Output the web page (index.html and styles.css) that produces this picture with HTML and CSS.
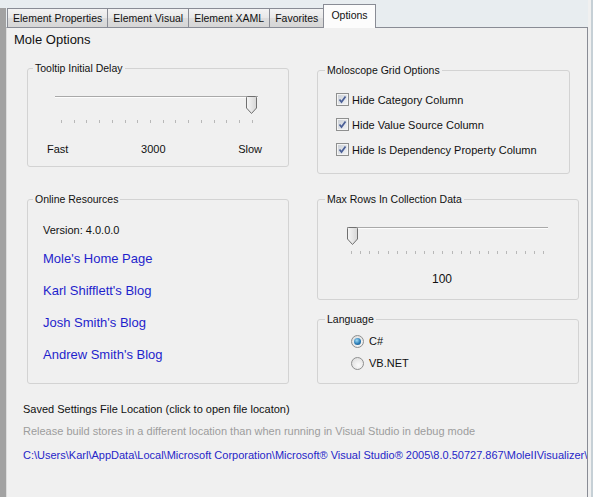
FILE: index.html
```html
<!DOCTYPE html>
<html lang="en">
<head>
	<meta charset="UTF-8">
	<title>Mole Options</title>
	<link rel="stylesheet" href="styles.css">
</head>
<body>
	<div class="window">
		<div class="edge-left"></div>
		<div class="main">
			<div class="tabs">
				<div class="tab">Element Properties</div>
				<div class="tab">Element Visual</div>
				<div class="tab">Element XAML</div>
				<div class="tab">Favorites</div>
				<div class="tab active">Options</div>
			</div>
			<div class="panel">
				<div class="title">Mole Options</div>
				<div class="columns">
					<div class="col">
						<fieldset class="group g-tooltip">
							<legend>Tooltip Initial Delay</legend>
							<div class="slider s-delay">
								<div class="track"></div>
								<svg class="thumb" width="11" height="18" viewBox="0 0 11 18">
									<defs><linearGradient id="tg1" x1="0" y1="0" x2="1" y2="0"><stop offset="0" stop-color="#f7f7f7"/><stop offset="1" stop-color="#d6d6d6"/></linearGradient></defs>
									<path d="M1.5 .5h8a1 1 0 0 1 1 1v10.5l-5 5.5l-5-5.5V1.5a1 1 0 0 1 1-1z" fill="url(#tg1)" stroke="#707070"/>
								</svg>
							</div>
							<div class="ticks t-delay">
								<span></span><span></span><span></span><span></span><span></span><span></span><span></span><span></span>
								<span></span><span></span><span></span><span></span><span></span><span></span><span></span><span></span>
							</div>
							<div class="scale"><span>Fast</span><span>3000</span><span>Slow</span></div>
						</fieldset>
						<fieldset class="group g-online">
							<legend>Online Resources</legend>
							<div class="version">Version: 4.0.0.0</div>
							<div class="links">
								<a href="#">Mole's Home Page</a>
								<a href="#">Karl Shifflett's Blog</a>
								<a href="#">Josh Smith's Blog</a>
								<a href="#">Andrew Smith's Blog</a>
							</div>
						</fieldset>
					</div>
					<div class="col col-right">
						<fieldset class="group g-grid">
							<legend>Moloscope Grid Options</legend>
							<div class="checks">
								<div class="check-row"><span class="cb"><svg width="11" height="11" viewBox="0 0 11 11"><path d="M2.5 5.5l2 2.6l4-5.6" stroke="#4a5f97" stroke-width="1.7" fill="none"/></svg></span>Hide Category Column</div>
								<div class="check-row"><span class="cb"><svg width="11" height="11" viewBox="0 0 11 11"><path d="M2.5 5.5l2 2.6l4-5.6" stroke="#4a5f97" stroke-width="1.7" fill="none"/></svg></span>Hide Value Source Column</div>
								<div class="check-row"><span class="cb"><svg width="11" height="11" viewBox="0 0 11 11"><path d="M2.5 5.5l2 2.6l4-5.6" stroke="#4a5f97" stroke-width="1.7" fill="none"/></svg></span>Hide Is Dependency Property Column</div>
							</div>
						</fieldset>
						<fieldset class="group g-rows">
							<legend>Max Rows In Collection Data</legend>
							<div class="slider s-rows">
								<div class="track"></div>
								<svg class="thumb" width="11" height="18" viewBox="0 0 11 18">
									<defs><linearGradient id="tg2" x1="0" y1="0" x2="1" y2="0"><stop offset="0" stop-color="#f7f7f7"/><stop offset="1" stop-color="#d6d6d6"/></linearGradient></defs>
									<path d="M1.5 .5h8a1 1 0 0 1 1 1v10.5l-5 5.5l-5-5.5V1.5a1 1 0 0 1 1-1z" fill="url(#tg2)" stroke="#707070"/>
								</svg>
							</div>
							<div class="ticks t-rows">
								<span></span><span></span><span></span><span></span><span></span><span></span><span></span><span></span><span></span><span></span><span></span>
								<span></span><span></span><span></span><span></span><span></span><span></span><span></span><span></span><span></span><span></span><span></span>
							</div>
							<div class="rows-value">100</div>
						</fieldset>
						<fieldset class="group g-lang">
							<legend>Language</legend>
							<div class="radios">
								<div class="radio-row"><span class="rb checked"></span>C#</div>
								<div class="radio-row"><span class="rb"></span>VB.NET</div>
							</div>
						</fieldset>
					</div>
				</div>
				<div class="settings">
					<div>Saved Settings File Location (click to open file locaton)</div>
					<div class="hint">Release build stores in a different location than when running in Visual Studio in debug mode</div>
					<div class="path">C:\Users\Karl\AppData\Local\Microsoft Corporation\Microsoft® Visual Studio® 2005\8.0.50727.867\MoleIIVisualizer\user.config</div>
				</div>
			</div>
		</div>
		<div class="edge-right"></div>
	</div>
</body>
</html>
```
FILE: styles.css
```css
*{
	box-sizing:border-box;
}
body{
	margin:0;
	background:#e8edf0;
	font-family:"Liberation Sans", Arial, sans-serif;
	font-size:11px;
	color:#111;
	overflow:hidden;
}
.window{
	display:flex;
	height:497px;
}
.edge-left{
	width:6px;
	margin-top:8px;
	background:#a2a2a2;
}
.main{
	width:582px;
	display:flex;
	flex-direction:column;
}
/*----------------tabs----------------*/
.tabs{
	height:27px;
	display:flex;
	align-items:flex-end;
	padding-left:1px;
}
.tab{
	height:19px;
	line-height:18px;
	padding:0 5px;
	font-size:10.5px;
	border:1px solid #898c95;
	border-bottom:0;
	border-right:0;
	background:linear-gradient(#f3f3f3, #e8e8e8 50%, #dddddd 51%, #d6d6d6);
	white-space:nowrap;
}
.tab.active{
	height:24px;
	line-height:20px;
	padding:0 7px;
	border-right:1px solid #898c95;
	background:#fcfcfc;
	margin-bottom:-1px;
	z-index:1;
}
/*----------------panel----------------*/
.panel{
	flex:1;
	background:#f0f0f0;
	border:1px solid #898c95;
	border-left-color:#dcdcdc;
	border-bottom:0;
	padding:4px 0 0 7px;
	overflow:hidden;
}
.title{
	font-size:13px;
	line-height:16px;
}
.columns{
	display:flex;
	gap:28px;
	margin:14px 0 0 13px;
}
.col{
	width:262px;
	display:flex;
	flex-direction:column;
}
.col-right{
	padding-top:2px;
}
.group{
	margin:0;
	padding:0;
	min-width:0;
	border:1px solid #d3d3d3;
	border-radius:3px;
}
.group legend{
	font-size:10.5px;
	line-height:13px;
	padding:0 2px;
	margin-left:5px;
}
.col-right .group legend{
	margin-left:7px;
}
.g-tooltip{ height:105px; }
.g-online{ height:191px; margin-top:26px; }
.g-grid{ width:253px; height:110px; }
.g-rows{ height:107px; margin-top:19px; }
.g-lang{ height:71px; margin-top:13px; }
/*----------------sliders----------------*/
.slider{
	position:relative;
	height:18px;
}
.s-delay{
	margin:21px 0 0 27px;
	width:203px;
}
.s-rows{
	margin:21px 0 0 29px;
	width:201px;
}
.track{
	margin-top:8px;
	height:2px;
	border-top:1px solid #a9a9a9;
	border-bottom:1px solid #fdfdfd;
}
.thumb{
	position:absolute;
	top:0;
	display:block;
}
.s-delay .thumb{ right:1px; }
.s-rows .thumb{ left:0; }
.ticks{
	display:flex;
	justify-content:space-between;
	height:3px;
	margin-top:6px;
}
.ticks span{
	width:1px;
	background:#b8b8b8;
}
.t-delay{ margin-left:33px; width:192px; }
.t-rows{ margin-left:33px; width:193px; }
.scale{
	display:flex;
	justify-content:space-between;
	margin:19px 26px 0 19px;
	line-height:14px;
}
.rows-value{
	text-align:center;
	margin-top:18px;
	line-height:14px;
	font-size:12px;
	padding-right:12px;
}
/*----------------online----------------*/
.version{
	margin:16px 0 0 15px;
	line-height:16px;
}
.links{
	margin-top:5px;
}
.links a{
	display:block;
	margin-left:15px;
	font-size:13px;
	line-height:32px;
	color:#1f1fcc;
	text-decoration:none;
}
/*----------------checks & radios----------------*/
.checks{
	padding:10px 0 0 18px;
}
.check-row{
	display:flex;
	align-items:center;
	gap:3px;
	height:25px;
}
.cb{
	width:13px;
	height:13px;
	border:1px solid #8e8f8f;
	background:linear-gradient(135deg, #c9ced5, #f4f5f7);
	box-shadow:inset 0 0 0 1px #f4f4f4;
}
.cb svg{
	display:block;
}
.radios{
	padding:4px 0 0 33px;
}
.radio-row{
	display:flex;
	align-items:center;
	gap:5px;
	height:22px;
}
.rb{
	width:13px;
	height:13px;
	border:1px solid #8e8f8f;
	border-radius:50%;
	background:radial-gradient(circle at 60% 65%, #fbfbfb, #d8d8d8);
	display:flex;
	align-items:center;
	justify-content:center;
}
.rb.checked::after{
	content:"";
	width:7px;
	height:7px;
	border-radius:50%;
	background:radial-gradient(circle at 40% 35%, #9edcf7, #2a7bb5 55%, #0f4a7a);
}
/*----------------settings----------------*/
.settings{
	margin:18px 0 0 9px;
	line-height:14px;
}
.settings .hint{
	color:#9d9d9d;
	margin-top:8px;
}
.settings .path{
	color:#2626c8;
	margin-top:10px;
	white-space:nowrap;
}
.edge-right{
	flex:1;
	background:#f0f0f0;
	border-right:2px solid #c6d0d6;
}
```
